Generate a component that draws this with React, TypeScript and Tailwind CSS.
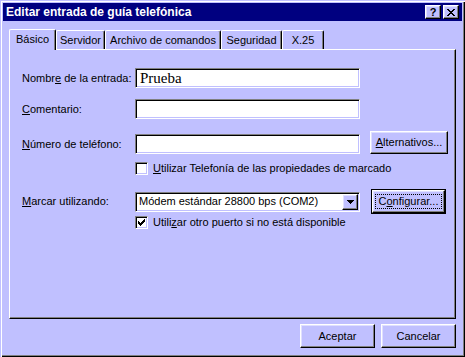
import React from "react";

const Btn = ({ children, className = "" }: { children: React.ReactNode; className?: string }) => (
  <div
    className={
      "bg-[#c0c0ff] border border-t-white border-l-white border-r-black border-b-black shadow-[inset_-1px_-1px_0_#808080,inset_1px_1px_0_#dfdfff] flex items-center justify-center " +
      className
    }
  >
    {children}
  </div>
);

const Field = ({ children, className = "" }: { children?: React.ReactNode; className?: string }) => (
  <div
    className={
      "bg-white border border-t-[#808080] border-l-[#808080] border-r-white border-b-white shadow-[inset_1px_1px_0_#000,inset_-1px_-1px_0_#c0c0ff] flex items-center " +
      className
    }
  >
    {children}
  </div>
);

const Check = ({ checked }: { checked?: boolean }) => (
  <Field className="w-[13px] h-[13px] justify-center">
    {checked && (
      <svg width="7" height="7" viewBox="0 0 7 7" shapeRendering="crispEdges">
        <path d="M6 0h1v3h-1zM5 1h1v3h-1zM4 2h1v3h-1zM0 2h1v3h-1zM1 3h1v3h-1zM2 4h1v3h-1zM3 3h1v3h-1z" fill="#000" />
      </svg>
    )}
  </Field>
);

const tabs = [
  { name: "Servidor", w: "w-[49px]" },
  { name: "Archivo de comandos", w: "w-[116px]" },
  { name: "Seguridad", w: "w-[61px]" },
  { name: "X.25", w: "w-[42px]" },
];

export default function App() {
  return (
    <div className="w-[465px] h-[357px] bg-[#c0c0ff] p-[3px] flex flex-col text-[11px] text-black font-['Liberation_Sans',Arial,sans-serif] shadow-[inset_1px_1px_0_#c0c0ff,inset_2px_2px_0_#fff,inset_-1px_-1px_0_#000,inset_-2px_-2px_0_#808080]">
      {/* title bar */}
      <div className="h-[18px] bg-[#000080] flex items-center justify-between pl-[3px] pr-[3px]">
        <span className="text-white font-bold text-[12px] leading-none">Editar entrada de guía telefónica</span>
        <div className="flex items-center">
          <Btn className="w-[16px] h-[14px]">
            <span className="font-bold text-[11px] leading-none">?</span>
          </Btn>
          <Btn className="w-[16px] h-[14px] ml-[2px]">
            <svg width="8" height="7" viewBox="0 0 8 7" shapeRendering="crispEdges">
              <path d="M0 0h2v1h-2zM6 0h2v1h-2zM1 1h2v1h-2zM5 1h2v1h-2zM2 2h4v1h-4zM3 3h2v1h-2zM2 4h4v1h-4zM1 5h2v1h-2zM5 5h2v1h-2zM0 6h2v1h-2zM6 6h2v1h-2z" fill="#000" />
            </svg>
          </Btn>
        </div>
      </div>

      <div className="flex flex-col px-[6px] mt-[7px]">
        {/* tabs */}
        <div className="flex items-end h-[21px]">
          <div className="w-[47px] h-[21px] -mb-px relative z-10 bg-[#c0c0ff] border-t border-l border-r border-t-white border-l-white border-r-black rounded-t-[2px] shadow-[inset_-1px_0_0_#808080] flex items-center justify-center pb-[2px]">
            Básico
          </div>
          {tabs.map((t) => (
            <div
              key={t.name}
              className={
                "h-[19px] bg-[#c0c0ff] border-t border-l border-r border-t-white border-l-white border-r-black rounded-t-[2px] shadow-[inset_-1px_0_0_#808080] flex items-center justify-center " +
                t.w
              }
            >
              {t.name}
            </div>
          ))}
        </div>

        {/* panel */}
        <div className="h-[270px] border border-t-white border-l-white border-r-black border-b-black shadow-[inset_-1px_-1px_0_#808080] pt-[18px] pl-[12px] flex flex-col">
          <div className="flex items-center h-[20px]">
            <span className="w-[113px]">
              Nombr<u>e</u> de la entrada:
            </span>
            <Field className="w-[225px] h-[20px] pl-[4px]">
              <span className="font-['Liberation_Serif','Times_New_Roman',serif] text-[15px] leading-none">Prueba</span>
            </Field>
          </div>

          <div className="flex items-center h-[20px] mt-[11px]">
            <span className="w-[113px]">
              <u>C</u>omentario:
            </span>
            <Field className="w-[225px] h-[20px]" />
          </div>

          <div className="flex items-end h-[23px] mt-[12px]">
            <span className="w-[113px] self-center pt-[3px]">
              <u>N</u>úmero de teléfono:
            </span>
            <Field className="w-[225px] h-[20px]" />
            <Btn className="w-[78px] h-[23px] ml-[10px] self-start">
              <span>
                <u>A</u>lternativos...
              </span>
            </Btn>
          </div>

          <div className="flex items-center h-[13px] mt-[8px] pl-[113px]">
            <Check />
            <span className="ml-[5px]">
              <u>U</u>tilizar Telefonía de las propiedades de marcado
            </span>
          </div>

          <div className="flex items-center h-[25px] mt-[14px]">
            <span className="w-[113px]">
              <u>M</u>arcar utilizando:
            </span>
            <Field className="w-[225px] h-[20px] pl-[3px] pr-[1px] justify-between">
              <span>Módem estándar 28800 bps (COM2)</span>
              <Btn className="w-[16px] h-[16px]">
                <svg width="7" height="4" viewBox="0 0 7 4" shapeRendering="crispEdges">
                  <path d="M0 0h7v1h-7zM1 1h5v1h-5zM2 2h3v1h-3zM3 3h1v1h-1z" fill="#000" />
                </svg>
              </Btn>
            </Field>
            <div className="w-[75px] h-[25px] ml-[11px] border border-black flex">
              <Btn className="flex-1 self-stretch">
                <span className="w-[67px] h-[15px] border border-dotted border-black flex items-center justify-center">
                  <span>
                    C<u>o</u>nfigurar...
                  </span>
                </span>
              </Btn>
            </div>
          </div>

          <div className="flex items-center h-[13px] mt-[2px] pl-[113px]">
            <Check checked />
            <span className="ml-[5px]">
              Utili<u>z</u>ar otro puerto si no está disponible
            </span>
          </div>
        </div>

        {/* bottom buttons */}
        <div className="flex justify-end gap-[6px] mt-[5px]">
          <Btn className="w-[75px] h-[24px]">Aceptar</Btn>
          <Btn className="w-[75px] h-[24px]">Cancelar</Btn>
        </div>
      </div>
    </div>
  );
}
